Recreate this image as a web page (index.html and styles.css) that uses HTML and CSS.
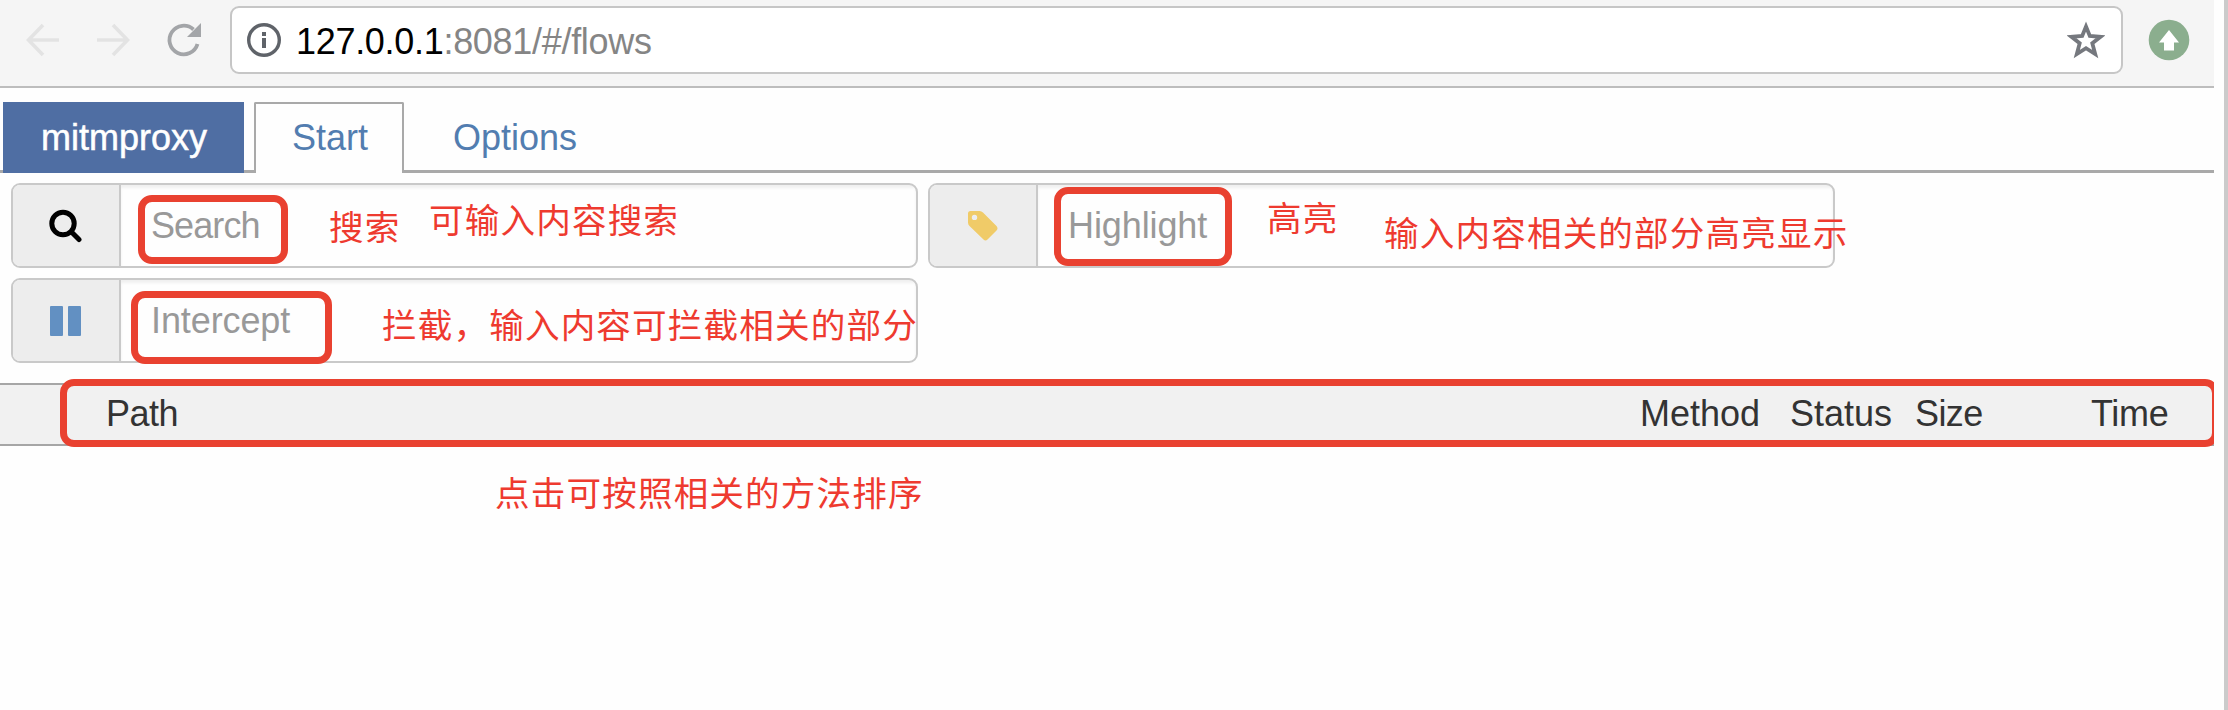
FILE: index.html
```html
<!DOCTYPE html>
<html lang="zh-CN">
<head>
<meta charset="utf-8">
<title>mitmproxy</title>
<link rel="stylesheet" href="styles.css">
</head>
<body>
<main class="window">
  <header class="toolbar">
    <svg class="nav-icon back" viewBox="0 0 34 34"><path d="M33 17H3M17 2 2.500 17 17 32"/></svg>
    <svg class="nav-icon forward" viewBox="0 0 34 34"><path d="M1 17h30M17 2l14.500 15L17 32"/></svg>
    <svg class="reload" viewBox="0 0 36 36"><path class="arc" d="M31.500 22A14.300 14.300 0 1 1 27.500 7.500"/><path class="head" d="M35 1v14H21z"/></svg>
    <div class="address">
      <svg class="info" viewBox="0 0 34 34"><circle cx="17" cy="17" r="15.300"/><path d="M15 9h4v4h-4zM15 15h4v10h-4z"/></svg>
      <span class="url"><span class="host">127.0.0.1</span>:8081/#/flows</span>
      <svg class="star" viewBox="0 0 38 38"><path d="M19 5.500 22.800 15 33.500 15.800 25.300 22.300 28.200 33 19 27.200 9.800 33 12.700 22.300 4.500 15.800 15.200 15z"/></svg>
    </div>
    <svg class="extension" viewBox="0 0 42 42"><circle cx="21" cy="21" r="20.300"/><path d="M21 11l10 12.500h-5V31.500H16V23.500h-5z"/></svg>
  </header>

  <nav class="tabs">
    <a class="tab brand">mitmproxy</a>
    <a class="tab active">Start</a>
    <a class="tab">Options</a>
  </nav>

  <section class="filters">
    <div class="filter">
      <span class="addon"><svg viewBox="0 0 34 34"><circle cx="15" cy="14.500" r="11.200" fill="none" stroke="#000" stroke-width="5"/><path d="M24 23.500l7 7" stroke="#000" stroke-width="5" stroke-linecap="round"/></svg></span>
      <span class="field search">Search</span>
    </div>
    <div class="filter">
      <span class="addon"><svg viewBox="0 0 34 34"><path fill="#f0cb68" fill-rule="evenodd" d="M3 4.500Q3 2 5.500 2H14.500Q16.500 2 18 3.500L31.500 17Q33.500 19.500 31.500 21.500L22.500 30.500Q20.500 32.500 18.500 30.500L4.500 17Q3 15.500 3 13.500zM9.500 5.700a2.700 2.700 0 1 0 0 5.400a2.700 2.700 0 1 0 0-5.400z"/></svg></span>
      <span class="field">Highlight</span>
    </div>
    <div class="filter">
      <span class="addon"><svg viewBox="0 0 34 34"><path fill="#6290c2" d="M3 2h11q1 0 1 1v28q0 1-1 1H3q-1 0-1-1V3q0-1 1-1zM21 2h11q1 0 1 1v28q0 1-1 1H21q-1 0-1-1V3q0-1 1-1z"/></svg></span>
      <span class="field">Intercept</span>
    </div>
  </section>

  <div class="flow-head">
    <span class="path">Path</span>
    <span class="method">Method</span>
    <span class="status">Status</span>
    <span class="size">Size</span>
    <span class="time">Time</span>
  </div>

  <div class="box box-search"></div>
  <div class="box box-highlight"></div>
  <div class="box box-intercept"></div>
  <div class="box box-table"></div>
  <p class="note note-search">搜索</p>
  <p class="note note-search-hint">可输入内容搜索</p>
  <p class="note note-highlight">高亮</p>
  <p class="note note-highlight-hint">输入内容相关的部分高亮显示</p>
  <p class="note note-intercept">拦截，输入内容可拦截相关的部分</p>
  <p class="note note-table">点击可按照相关的方法排序</p>
</main>
<div class="window-edge"></div>
</body>
</html>
```

FILE: styles.css
```css
* { box-sizing: border-box; }

body {
  margin: 0;
  height: 710px;
  display: flex;
  justify-content: space-between;
  overflow: hidden;
  background: #fefefe;
  font: 36px/40px "Liberation Sans", "Noto Sans CJK SC", sans-serif;
}

.window {
  position: relative;
  width: 2214px;
  height: 710px;
  overflow: hidden;
}

.window-edge { width: 4px; background: #cbcbcb; }

/* Browser toolbar */
.toolbar {
  display: flex;
  align-items: center;
  height: 88px;
  padding: 0 22px 6px 26px;
  background: #f5f5f5;
  border-bottom: 2px solid #bdbdbd;
}

.toolbar svg { flex: none; }

.nav-icon {
  width: 34px;
  height: 34px;
  fill: none;
  stroke: #e3e3e3;
  stroke-width: 3.6;
}

.forward { margin-left: 36px; }

.reload { width: 36px; height: 36px; margin-left: 36px; }
.arc { fill: none; stroke: #a3a5a8; stroke-width: 3.8; }
.head { fill: #a3a5a8; }

.address {
  display: flex;
  align-items: center;
  width: 1893px;
  height: 68px;
  margin-left: 28px;
  padding: 0 16px 0 15px;
  background: #fff;
  border: 2px solid #c6c6c6;
  border-radius: 9px;
}

.info { width: 34px; height: 34px; }
.info circle { fill: none; stroke: #5f6369; stroke-width: 3.4; }
.info path { fill: #5f6369; }

.url {
  flex: 1;
  margin: 3px 0 0 15px;
  color: #858585;
  letter-spacing: -0.3px;
  white-space: nowrap;
}

.host { color: #000; }

.star { width: 38px; height: 38px; fill: none; stroke: #75787e; stroke-width: 3.8; }

.extension { width: 42px; height: 42px; margin-left: 25px; }
.extension circle { fill: #8bae8e; }
.extension path { fill: #fff; }

/* Tabs */
.tabs {
  display: flex;
  height: 85px;
  padding: 14px 0 0 3px;
  border-bottom: 3px solid #a9a9a9;
}

.tab {
  height: 68px;
  padding: 14px 35px 0;
  border: 2px solid transparent;
  border-bottom: 0;
  color: #527db0;
}

/* The brand and the open tab cover the rule below them */
.brand,
.active { height: 71px; }

.brand {
  width: 241px;
  margin-right: 10px;
  padding-left: 36px;
  color: #fff;
  background: #4f6ea3;
  -webkit-text-stroke: 0.5px #fff;
}

.active {
  width: 150px;
  margin-right: 12px;
  padding-left: 36px;
  background: #fefefe;
  border-color: #a9a9a9;
  border-radius: 2px 2px 0 0;
}

/* Filter inputs */
.filters {
  display: flex;
  flex-wrap: wrap;
  gap: 10px 10px;
  padding: 10px 0 0 11px;
}

.filter {
  display: flex;
  width: 907px;
  height: 85px;
  border: 2px solid #c9c9c9;
  border-radius: 9px;
  overflow: hidden;
}

.addon {
  display: flex;
  align-items: center;
  justify-content: center;
  width: 108px;
  background: #ededed;
  border-right: 2px solid #c9c9c9;
}

.addon svg { width: 34px; height: 34px; margin-right: 2px; }

.field {
  flex: 1;
  padding: 21px 0 0 30px;
  color: #999;
  letter-spacing: -0.1px;
  box-shadow: inset 0 3px 3px rgba(0, 0, 0, 0.06);
}

.search { letter-spacing: -0.9px; }

/* Flow table header */
.flow-head {
  display: flex;
  height: 63px;
  margin-top: 20px;
  padding: 9px 0 0 106px;
  color: #333;
  background: #f1f1f1;
  border-top: 2px solid #a6a6a6;
  border-bottom: 2px solid #a6a6a6;
}

.path { width: 1534px; letter-spacing: -0.5px; }
.method { width: 150px; }
.status { width: 125px; }
.size { width: 176px; letter-spacing: -0.6px; }
.time { letter-spacing: -0.3px; }

/* Annotations laid over the page */
.box {
  position: absolute;
  border: 7px solid #e94130;
  border-radius: 14px;
}

.box-search { left: 138px; top: 195px; width: 150px; height: 69px; }
.box-highlight { left: 1054px; top: 187px; width: 178px; height: 79px; }
.box-intercept { left: 131px; top: 291px; width: 201px; height: 73px; }
.box-table { left: 60px; top: 379px; width: 2159px; height: 68px; }

.note {
  position: absolute;
  margin: 0;
  color: #ee3a2f;
  font: 34.6px/40px "Noto Sans CJK SC", sans-serif;
  letter-spacing: 1.15px;
  white-space: nowrap;
}

.note-search { left: 329px; top: 205px; }
.note-search-hint { left: 429px; top: 198px; }
.note-highlight { left: 1267px; top: 196px; }
.note-highlight-hint { left: 1384px; top: 211px; }
.note-intercept { left: 382px; top: 303px; }
.note-table { left: 495px; top: 471px; }
```
